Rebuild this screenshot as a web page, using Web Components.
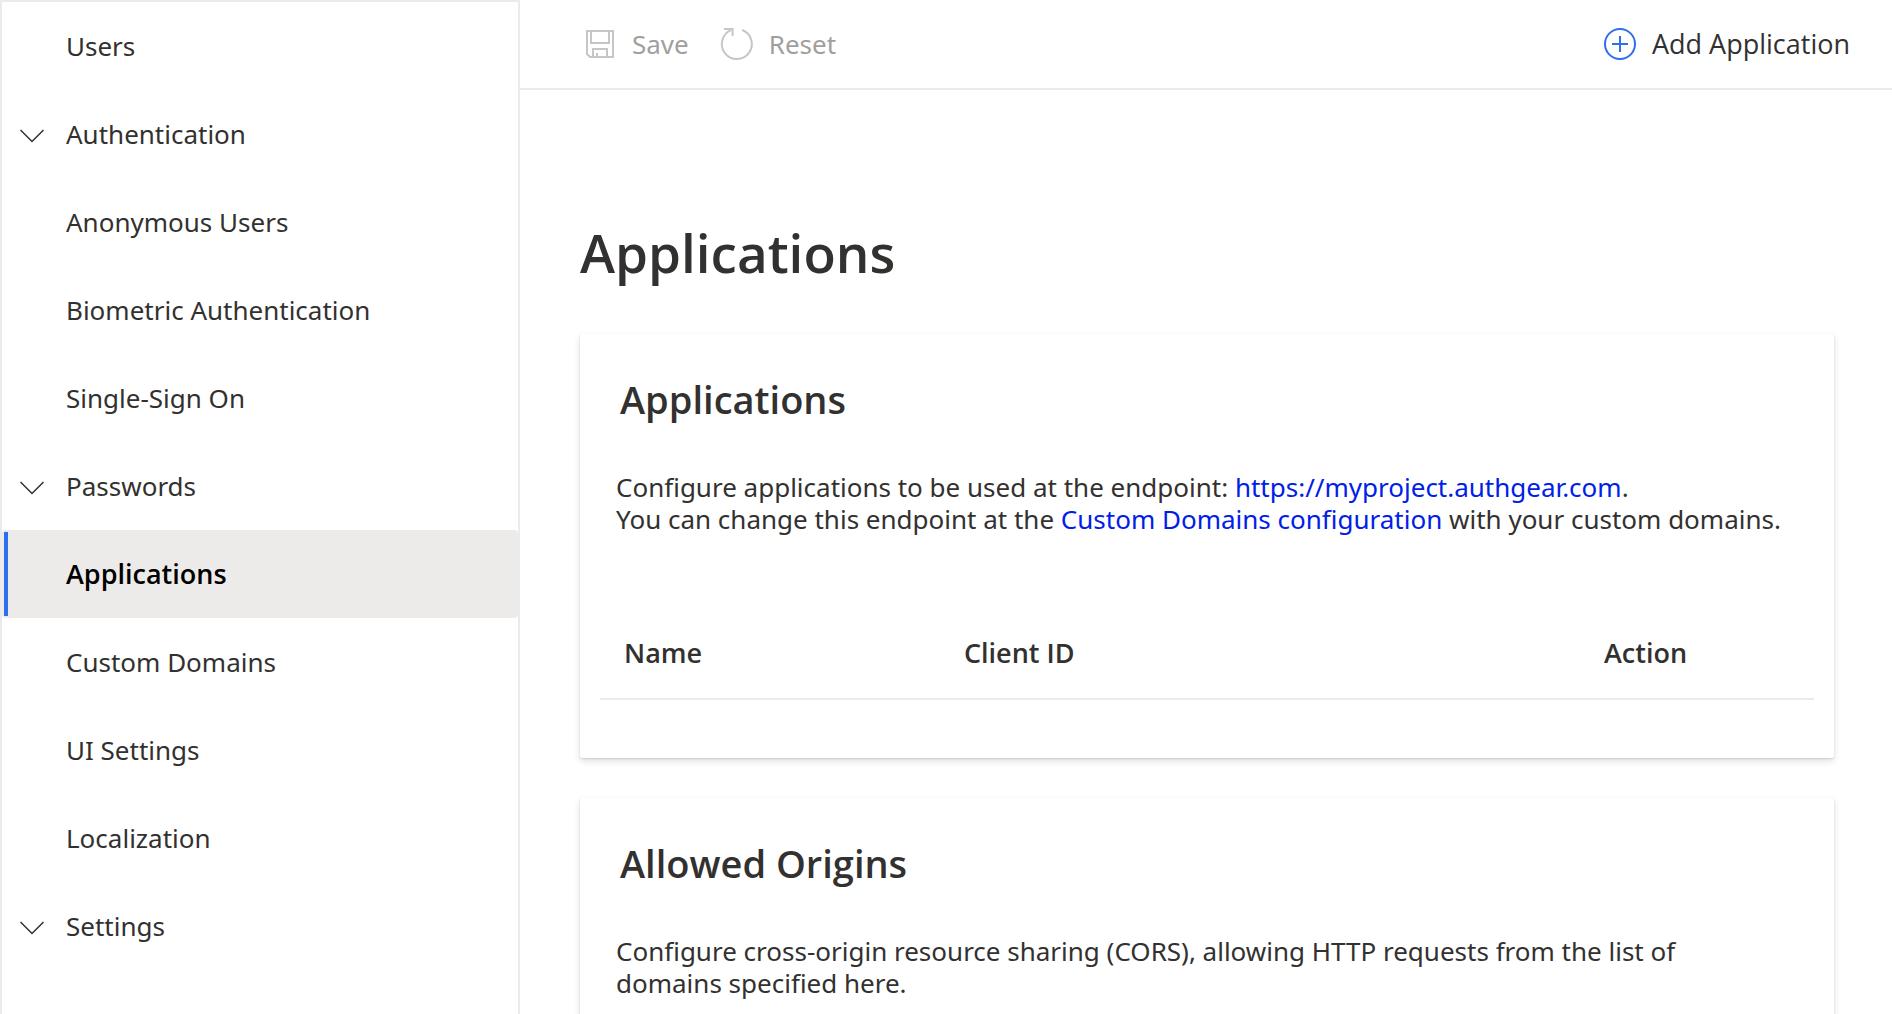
<!DOCTYPE html>
<html lang="en">
<head>
<meta charset="utf-8">
<title>Applications</title>
<style>
  :root {
    --ink: #323130;
    --muted: #a19f9d;
    --icon-muted: #c8c6c4;
    --line: #ebebeb;
    --accent: #2f6fed;
    --link: #0020e8;
    --text: 26px;
    --strong: 27px;
    --title: 38px;
    --display: 53px;
    --heading-font: "Segoe UI", "Open Sans", sans-serif;
  }
  body {
    margin: 0;
    background: #fff;
    color: var(--ink);
    font: 400 var(--text)/32px "Segoe UI", "Noto Sans", "Open Sans", sans-serif;
  }
</style>
</head>
<body>
<app-shell>
  <side-nav slot="nav">
    <nav-item href="#users">Users</nav-item>
    <nav-item href="#authentication" group>Authentication</nav-item>
    <nav-item href="#anonymous-users">Anonymous Users</nav-item>
    <nav-item href="#biometric">Biometric Authentication</nav-item>
    <nav-item href="#sso">Single-Sign On</nav-item>
    <nav-item href="#passwords" group>Passwords</nav-item>
    <nav-item href="#applications" current>Applications</nav-item>
    <nav-item href="#custom-domains">Custom Domains</nav-item>
    <nav-item href="#ui-settings">UI Settings</nav-item>
    <nav-item href="#localization">Localization</nav-item>
    <nav-item href="#settings" group>Settings</nav-item>
  </side-nav>
  <command-bar slot="bar">
    <command-button icon="save" disabled>Save</command-button>
    <command-button icon="reset" disabled>Reset</command-button>
    <command-button icon="add" slot="end">Add Application</command-button>
  </command-bar>
  <page-title>Applications</page-title>
  <content-card heading="Applications">
    <card-text nowrap>Configure applications to be used at the endpoint: <text-link href="#endpoint">https://myproject.authgear.com</text-link>.<br>You can change this endpoint at the <text-link href="#custom-domains">Custom Domains configuration</text-link> with your custom domains.</card-text>
    <application-table></application-table>
  </content-card>
  <content-card heading="Allowed Origins">
    <card-text>Configure cross-origin resource sharing (CORS), allowing HTTP requests from the list of domains specified here.</card-text>
  </content-card>
</app-shell>
<script>
  const define = (name, markup, setup) => {
    const template = document.createElement('template');
    template.innerHTML = markup;
    customElements.define(name, class extends HTMLElement {
      connectedCallback() {
        if (this.shadowRoot) return;
        this.attachShadow({ mode: 'open' }).append(template.content.cloneNode(true));
        if (setup) setup(this, this.shadowRoot);
      }
    });
  };

  define('app-shell', `
    <style>
      :host { display: flex; height: 100vh; overflow: hidden; }
      .content { flex: 1; min-width: 0; display: flex; flex-direction: column; }
      main { flex: 1; min-height: 0; overflow: hidden; padding: 0 58px 0 60px; }
    </style>
    <slot name="nav"></slot>
    <div class="content">
      <slot name="bar"></slot>
      <main><slot></slot></main>
    </div>`);

  define('side-nav', `
    <style>
      :host { display: block; box-sizing: border-box; flex: 0 0 520px; border: 2px solid var(--line); border-bottom: 0; }
      nav { display: flex; flex-direction: column; }
    </style>
    <nav aria-label="Main"><slot></slot></nav>`);

  define('nav-item', `
    <style>
      :host { display: flex; align-items: center; height: 88px; border-radius: 4px; }
      .lead { flex: 0 0 64px; display: flex; }
      button { display: none; margin: 0 0 0 16px; padding: 0; border: 0; background: none; color: inherit; }
      :host([group]) button { display: flex; }
      svg { display: block; width: 28px; height: 28px; }
      a { flex: 1; color: inherit; text-decoration: none; }
      :host([current]) { background: #edebe9; color: #000; font-weight: 600; font-family: var(--heading-font); font-size: var(--strong); }
      :host([current]) .lead::before { content: ""; width: 4px; height: 84px; margin-left: 2px; background: var(--accent); }
    </style>
    <span class="lead"><button type="button" aria-label="Collapse" aria-expanded="true">
      <svg viewBox="0 0 28 28" fill="none" stroke="currentColor" stroke-width="1.5"><path d="M2.5 10 14 21.5 25.5 10"/></svg>
    </button></span>
    <a><slot></slot></a>`,
    (host, root) => {
      const a = root.querySelector('a');
      a.href = host.getAttribute('href');
      if (host.hasAttribute('current')) a.setAttribute('aria-current', 'page');
    });

  define('command-bar', `
    <style>
      :host { display: flex; justify-content: space-between; align-items: center; height: 88px; padding: 0 42px 0 64px; border-bottom: 2px solid var(--line); }
      div { display: flex; gap: 32px; }
    </style>
    <div><slot></slot></div>
    <div><slot name="end"></slot></div>`);

  const icons = {
    save: '<path d="M3 3H29V29H6L3 26ZM7 3V15H25V3M9 29V21H23V29M13 29V25"/>',
    reset: '<path d="M21.2 2A15 15 0 1 1 10 2.2M3 1H11.6V8"/>',
    add: '<circle cx="16" cy="16" r="15"/><path d="M16 8V24M8 16H24"/>'
  };
  define('command-button', `
    <style>
      :host { display: block; }
      button { display: flex; align-items: center; gap: 16px; margin: 0; padding: 0; border: 0; background: none; font: 400 var(--strong)/32px var(--heading-font); color: var(--ink); }
      svg { display: block; width: 32px; height: 32px; overflow: visible; color: var(--accent); }
      button:disabled { color: var(--muted); font: inherit; }
      button:disabled svg { color: var(--icon-muted); }
    </style>
    <button type="button"><svg viewBox="0 0 32 32" fill="none" stroke="currentColor" stroke-width="2" aria-hidden="true"></svg><span><slot></slot></span></button>`,
    (host, root) => {
      root.querySelector('svg').innerHTML = icons[host.getAttribute('icon')];
      root.querySelector('button').disabled = host.hasAttribute('disabled');
    });

  define('page-title', `
    <style>
      :host { display: block; padding: 126px 0 44px; }
      h1 { margin: 0; font: 600 var(--display)/74px var(--heading-font); }
    </style>
    <h1><slot></slot></h1>`);

  define('content-card', `
    <style>
      :host { display: block; padding: 40px 20px 58px; margin-bottom: 40px; border-radius: 2px; background: #fff;
        box-shadow: 0 3px 7px rgba(0,0,0,.13), 0 1px 2px rgba(0,0,0,.11); }
      h2 { margin: 0 0 47px; padding: 0 20px; font: 600 var(--title)/50px var(--heading-font); }
    </style>
    <section><h2></h2><slot></slot></section>`,
    (host, root) => { root.querySelector('h2').textContent = host.getAttribute('heading'); });

  define('card-text', `
    <style>
      :host { display: block; padding: 0 32px 0 16px; }
      :host([nowrap]) { white-space: nowrap; }
      p { margin: 0; }
    </style>
    <p><slot></slot></p>`);

  define('text-link', `
    <style>
      :host { display: inline; }
      a { color: var(--link); text-decoration: none; }
    </style><a><slot></slot></a>`,
    (host, root) => { root.querySelector('a').href = host.getAttribute('href'); });

  define('application-table', `
    <style>
      :host { display: block; padding-top: 77px; }
      table { width: 100%; table-layout: fixed; border-collapse: collapse; }
      th { box-sizing: border-box; height: 87px; padding: 0 24px 4px; text-align: left; font: 600 var(--strong)/32px var(--heading-font); border-bottom: 2px solid var(--line); }
      .name { width: 28%; }
      .action { width: 234px; }
    </style>
    <table>
      <thead><tr><th class="name" scope="col">Name</th><th scope="col">Client ID</th><th class="action" scope="col">Action</th></tr></thead>
      <tbody></tbody>
    </table>`);
</script>
</body>
</html>
